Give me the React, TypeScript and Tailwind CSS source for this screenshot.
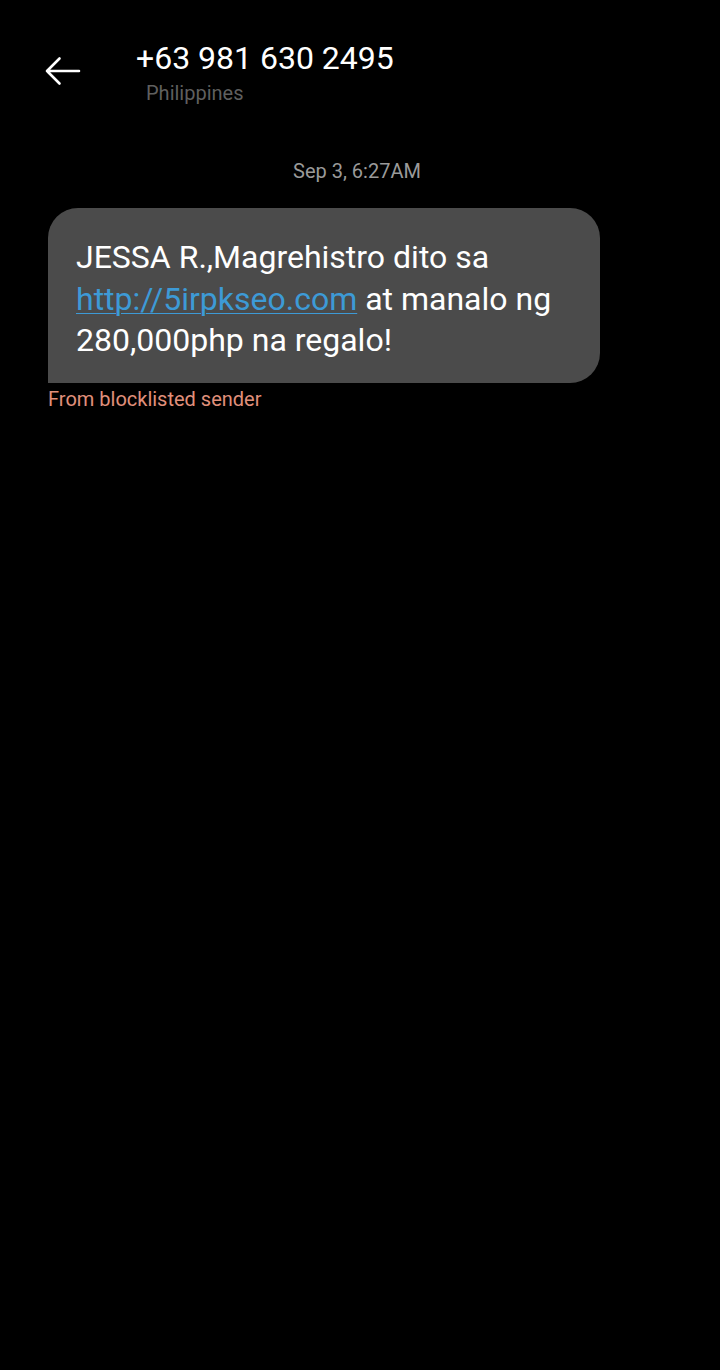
export default function App() {
  return (
    <main
      className="flex min-h-[1370px] w-[720px] flex-col bg-black text-white"
      style={{ fontFamily: 'Roboto, "Liberation Sans", sans-serif' }}
    >
      <header className="flex items-start pt-[39px]">
        <div className="flex w-[136px] shrink-0 pl-[44px] pt-[16px]">
          <svg width="38" height="32" viewBox="0 0 38 32" fill="none">
            <path
              d="M3 16H35M3 16L15.5 3.5M3 16L15.5 28.5"
              stroke="white"
              strokeWidth="2.6"
              strokeLinecap="round"
              strokeLinejoin="round"
            />
          </svg>
        </div>
        <div className="flex flex-col">
          <div className="text-[32px] leading-[38px]">+63 981 630 2495</div>
          <div className="pl-[10px] pt-[2px] text-[20px] leading-[28px] text-[#5f5f5f]">
            Philippines
          </div>
        </div>
      </header>

      <div className="mt-[51px] pr-[6px] text-center text-[20px] leading-[26px] text-[#9a9a9a]">
        Sep 3, 6:27AM
      </div>

      <section className="mt-[24px] flex flex-col px-[48px]">
        <div className="w-[552px] rounded-[30px] rounded-bl-none bg-[#4b4b4b] px-[28px] pb-[21px] pt-[29px] text-[32px] leading-[41.5px]">
          JESSA R.,Magrehistro dito sa{' '}
          <span className="text-[#3d9ad6] underline decoration-1 underline-offset-[3px]">
            http://5irpkseo.com
          </span>{' '}
          at manalo ng 280,000php na regalo!
        </div>
        <div className="mt-[3px] text-[20px] leading-[26px] text-[#e0907b]">
          From blocklisted sender
        </div>
      </section>
    </main>
  )
}
